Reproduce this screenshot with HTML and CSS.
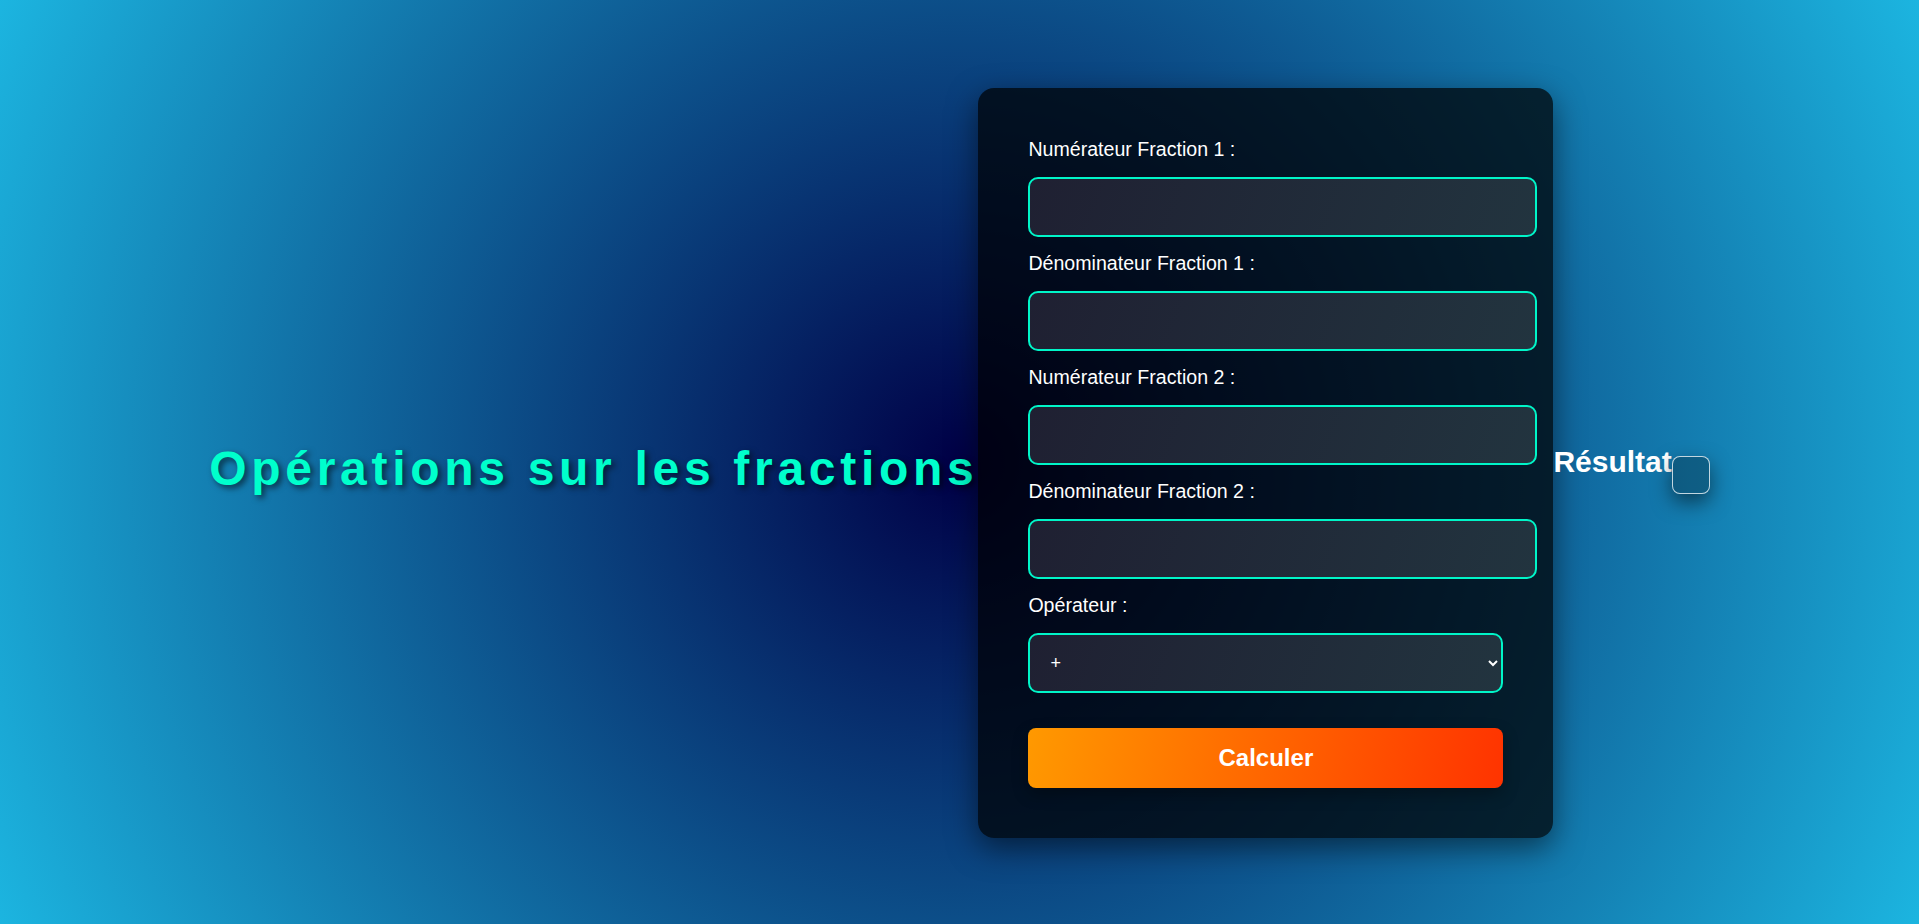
FILE: index.html
```html
<!DOCTYPE html>
<html lang="fr">
<head>
<meta charset="UTF-8">
<title>Opérations sur les fractions</title>
<link rel="stylesheet" href="styles.css">
</head>
<body>
  <h1 class="title">Opérations sur les fractions</h1>
  <form class="card">
    <label class="field-label" for="n1">Numérateur Fraction 1 :</label>
    <input class="field" type="number" id="n1">
    <label class="field-label" for="d1">Dénominateur Fraction 1 :</label>
    <input class="field" type="number" id="d1">
    <label class="field-label" for="n2">Numérateur Fraction 2 :</label>
    <input class="field" type="number" id="n2">
    <label class="field-label" for="d2">Dénominateur Fraction 2 :</label>
    <input class="field" type="number" id="d2">
    <label class="field-label" for="op">Opérateur :</label>
    <select class="operator" id="op">
      <option>+</option>
      <option>-</option>
      <option>*</option>
      <option>/</option>
    </select>
    <button class="submit" type="button">Calculer</button>
  </form>
  <h2 class="result-title">Résultat</h2>
  <div class="result-box"></div>
</body>
</html>
```
FILE: styles.css
```css
html, body {
  margin: 0;
  padding: 0;
}

body {
  height: 100vh;
  display: flex;
  flex-direction: row;
  justify-content: center;
  align-items: center;
  font-family: "Liberation Sans", Arial, sans-serif;
  background: radial-gradient(circle, #000046, #1cb5e0);
  overflow: hidden;
}

.title {
  margin: 12px 0 0 0;
  font-size: 48px;
  font-weight: bold;
  letter-spacing: 4.7px;
  color: #00ffcc;
  text-shadow: 3px 3px 6px rgba(0, 0, 0, 0.6);
  white-space: nowrap;
}

.card {
  width: 475px;
  padding: 50px;
  margin-top: 2px;
  border-radius: 16px;
  background: rgba(0, 0, 0, 0.72);
  box-shadow: 0 10px 30px rgba(0, 0, 0, 0.5);
  display: flex;
  flex-direction: column;
  align-items: flex-start;
  flex-shrink: 0;
}

.field-label {
  display: block;
  font-size: 19.6px;
  line-height: 23px;
  color: #ffffff;
  margin-bottom: 16px;
}

.field {
  box-sizing: content-box;
  width: 100%;
  height: 26px;
  padding: 15px;
  margin: 0 0 15px 0;
  border: 2px solid #00f5c8;
  border-radius: 10px;
  background: linear-gradient(110deg, #1f2032, #22343f);
  color: #ffffff;
  font-family: "Liberation Sans", Arial, sans-serif;
  font-size: 18px;
  outline: none;
}

.operator {
  box-sizing: border-box;
  width: 100%;
  height: 60px;
  padding: 0 12px 0 16px;
  margin: 0 0 35px 0;
  border: 2px solid #00f5c8;
  border-radius: 10px;
  background: linear-gradient(110deg, #1f2032, #22343f);
  color: #ffffff;
  font-family: "Liberation Sans", Arial, sans-serif;
  font-size: 18px;
  outline: none;
}

.submit {
  width: 100%;
  height: 60px;
  border: none;
  border-radius: 8px;
  background: linear-gradient(100deg, #ff9900, #ff3300);
  color: #ffffff;
  font-family: "Liberation Sans", Arial, sans-serif;
  font-size: 24px;
  font-weight: bold;
  box-shadow: 0 6px 16px rgba(0, 0, 0, 0.3);
  cursor: pointer;
}

.result-title {
  margin: 0;
  font-size: 30px;
  font-weight: bold;
  color: #ffffff;
  white-space: nowrap;
}

.result-box {
  box-sizing: border-box;
  width: 38px;
  height: 38px;
  margin-top: 26px;
  border: 1px solid rgba(255, 255, 255, 0.75);
  border-radius: 8px;
  background: rgba(0, 0, 0, 0.25);
  box-shadow: 0 8px 20px rgba(0, 0, 0, 0.5);
}
```
